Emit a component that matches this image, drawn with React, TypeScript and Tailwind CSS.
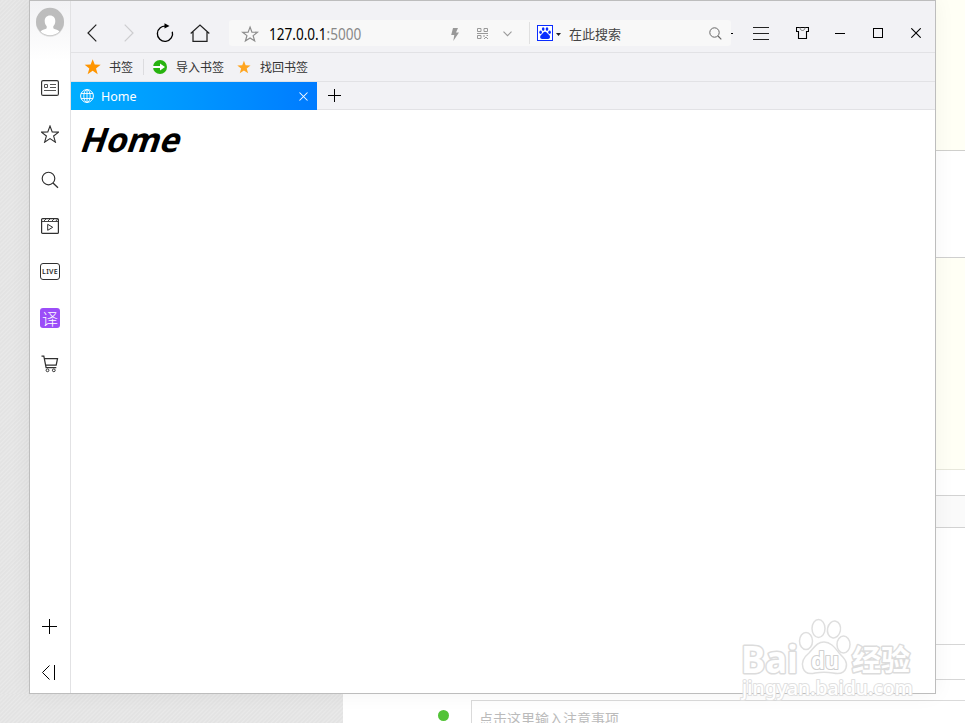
import React from "react";

const UI = "font-['Noto_Sans','Noto_Sans_CJK_SC',sans-serif]";

type IconProps = {
  w: number;
  h: number;
  className?: string;
  children: React.ReactNode;
};

function Icon({ w, h, className = "", children }: IconProps) {
  return (
    <svg
      width={w}
      height={h}
      viewBox={`0 0 ${w} ${h}`}
      fill="none"
      stroke="currentColor"
      className={`block shrink-0 ${className}`}
    >
      {children}
    </svg>
  );
}

const STAR = "M9 1 L11.2 6.9 L17.6 7.1 L12.6 11 L14.4 17.2 L9 13.6 L3.6 17.2 L5.4 11 L0.4 7.1 L6.8 6.9 Z";

/* Page that is partly visible behind the browser window */
function BackgroundPage() {
  return (
    <div className="flex h-full w-full flex-col">
      <div className="flex h-[694px] shrink-0">
        <div className="w-[343px] bg-[#e6e6e6] bg-[repeating-linear-gradient(135deg,#e3e3e3_0px,#e3e3e3_1px,#e9e9e9_2px,#e5e5e5_3px)]" />
        <div className="flex-1 bg-white" />
        <div className="flex w-[30px] flex-col bg-white">
          <div className="h-[151px] border-b border-[#cfcfcc] bg-[#fffff5]" />
          <div className="h-[107px] border-b border-[#cfcfcf]" />
          <div className="h-[212px] border-b border-[#e8e8dc] bg-[#fffff5]" />
          <div className="h-[26px] border-b border-[#d2d2d2]" />
          <div className="h-8 border-b border-[#d2d2d2] bg-[#fafafa]" />
          <div className="h-[117px] border-b border-[#d6d6d6]" />
          <div className="h-[35px] border-b border-[#d6d6d6]" />
        </div>
      </div>
      <div className="flex h-[29px] overflow-hidden">
        <div className="w-[343px] bg-[#e6e6e6] bg-[repeating-linear-gradient(135deg,#e3e3e3_0px,#e3e3e3_1px,#e9e9e9_2px,#e5e5e5_3px)]" />
        <div className="flex flex-1 bg-white pl-[95px]">
          <div className="mt-4 size-[11px] rounded-full bg-[#52c337]" />
          <div className="ml-[22px] mt-1.5 flex-1 overflow-hidden border-l border-t border-[#dadada] pl-[7px] pt-2">
            <div className="whitespace-nowrap text-[14px] leading-5 text-[#bbbbbb]">点击这里输入注意事项</div>
          </div>
        </div>
      </div>
    </div>
  );
}

function Sidebar() {
  return (
    <aside className="flex w-[41px] flex-col items-center border-r border-[#e2e2e4] bg-[linear-gradient(#f2f2f4_0px,#ffffff_60px)] text-[#303030]">
      <Icon w={30} h={30} className="mt-1.5">
        <circle cx="15" cy="15.8" r="14" fill="#dedede" stroke="none" />
        <circle cx="15" cy="14.8" r="14" fill="#bdbdbd" stroke="none" />
        <path d="M15 8.5c-3.4 0-5.3 2.3-5.3 5.6 0 2.6 1 4.1 2 5.2v2c-1 1-4.500 1.200-6.200 3.200A14 14 0 0 0 24.500 24.500c-1.700-2-5.200-2.200-6.200-3.200v-2c1-1.100 2-2.600 2-5.200 0-3.300-1.900-5.600-5.300-5.600z" fill="#fff" stroke="none" />
      </Icon>
      <Icon w={18} h={16} className="mt-[43px]">
        <rect x=".6" y=".6" width="16.800" height="14.800" rx="1.500" strokeWidth="1.150" />
        <path d="M3.500 4.500h3v3h-3zM9 4.500h6M9 7.500h6M3 10.500h12" stroke="#555" />
      </Icon>
      <Icon w={18} h={18} className="mt-[29px]">
        <path d={STAR} strokeWidth="1.100" />
      </Icon>
      <Icon w={18} h={18} className="mt-7">
        <circle cx="7.500" cy="7.500" r="6.300" strokeWidth="1.150" />
        <path d="M12 12l5 4.700" strokeWidth="1.300" />
      </Icon>
      <Icon w={18} h={16} className="mt-[29px]">
        <rect x=".6" y=".6" width="16.800" height="14.800" rx="1" strokeWidth="1.200" />
        <path d="M1 3.500h16M3 3l2-2M7 3l2-2M11 3l2-2M15 3l1.500-2" strokeWidth=".9" />
        <path d="M6.700 6.300v6l5-3z" />
      </Icon>
      <div className="mt-[29px] flex h-[17px] w-5 items-center justify-center rounded-[3px] border border-[#303030] text-[7px] font-semibold leading-none tracking-[0.3px]">
        LIVE
      </div>
      <div className="mt-7 flex size-5 items-center justify-center rounded-[3px] bg-[#9b4df8] font-['Noto_Sans_CJK_SC',sans-serif] text-[16px] font-light leading-none text-white">
        译
      </div>
      <Icon w={18} h={18} className="mt-[27px]">
        <path d="M.5 1h2.300l2.300 11.600h10.200M3.500 3.500h13L15.200 10H5" strokeWidth="1.250" />
        <circle cx="6.500" cy="15.300" r="1.400" />
        <circle cx="12.800" cy="15.300" r="1.400" />
      </Icon>
      <div className="flex-1" />
      <Icon w={15} h={15} className="mr-0.5 text-black">
        <path d="M7.500 0v15M0 7.500h15" />
      </Icon>
      <Icon w={14} h={15} className="mb-[13px] mr-0.5 mt-[31px] text-black">
        <path d="M7.500.5l-7 7 7 7M12.500 0v15" />
      </Icon>
    </aside>
  );
}

function PawBadge() {
  return (
    <Icon w={16} h={16}>
      <rect x=".5" y=".5" width="15" height="15" fill="#fff" stroke="#0a2cff" />
      <g fill="#0a2cff" stroke="none">
        <ellipse cx="3.600" cy="7.300" rx="1.300" ry="1.700" />
        <ellipse cx="6.200" cy="4.100" rx="1.300" ry="1.800" />
        <ellipse cx="10" cy="4.100" rx="1.300" ry="1.800" />
        <ellipse cx="12.600" cy="7.300" rx="1.300" ry="1.700" />
        <path d="M8 6.800c-1.800 0-2.200 2-3.700 3-1.700 1.300-1.500 4.200.8 4.200h6c2.300 0 2.500-2.900.8-4.200C10.400 8.800 9.800 6.800 8 6.800z" />
      </g>
    </Icon>
  );
}

function Toolbar() {
  return (
    <div className="flex h-[52px] items-center border-b border-[#e2e2e5] pt-[13px] text-[#222]">
      <Icon w={10} h={18} className="ml-4">
        <path d="M9.300.7L1 9l8.300 8.300" strokeWidth="1.200" />
      </Icon>
      <Icon w={10} h={18} className="ml-[27px] text-[#cdcdcf]">
        <path d="M.7.7L9 9 .7 17.300" strokeWidth="1.200" />
      </Icon>
      <Icon w={18} h={20} className="ml-[22px] text-black">
        <path d="M16.300 8.700A7.600 7.600 0 1 1 10.500 3.300" strokeWidth="1.350" />
        <path d="M8.500.3l5 2.700-5 2.500z" fill="currentColor" stroke="none" />
      </Icon>
      <Icon w={20} h={18} className="ml-4">
        <path d="M.7 9.500L10 1l9.300 8.500M3 8v9.300h14V8" strokeWidth="1.250" />
      </Icon>
      <div className="ml-[19px] flex h-[26px] w-[502px] items-center rounded-[3px] bg-[#f8f8f8] text-[#999]">
        <Icon w={18} h={18} className="ml-3 mt-0.5 text-[#8c8c8c]">
          <g transform="translate(1.300 1.200) scale(.86)">
            <path d={STAR} strokeWidth="1.350" />
          </g>
        </Icon>
        <div className="ml-[10px] w-[184px] whitespace-nowrap pt-px">
          <span className="inline-block origin-left scale-x-[0.876] text-[15.5px] leading-5 text-[#888]">
            <span className="text-black">127.0.0.1</span>:5000
          </span>
        </div>
        <Icon w={8} h={13} className="-ml-0.5 mt-0.5">
          <path d="M2 0h5L5 4.500h3L2.300 13l1-6H.2z" fill="#999" stroke="none" />
        </Icon>
        <Icon w={11} h={11} className="ml-[18px]">
          <path d="M.5.500h3.500v3H.500zM7 .5h3.500v3H7zM.5 7.500H4v3H.500zM0 5.500h11M7 7v2M9.500 7.500h1.500M8 9.500h2M7 10.500h1M10 10.500h1" />
        </Icon>
        <Icon w={9} h={6} className="ml-[15px] mt-0.5">
          <path d="M.5.700l4 4 4-4" strokeWidth="1.100" />
        </Icon>
        <div className="ml-[17px] h-[22px] w-px bg-[#e0e0e0]" />
        <div className="ml-[7px]">
          <PawBadge />
        </div>
        <Icon w={5} h={3} className="ml-[3px] mt-0.5">
          <path d="M0 0h5L2.500 3z" fill="#222" stroke="none" />
        </Icon>
        <span className="ml-2 whitespace-nowrap pt-0.5 text-[13px] leading-5 text-[#444]">在此搜索</span>
        <Icon w={13} h={13} className="ml-auto mr-[9px] mt-px text-[#666]">
          <circle cx="5.500" cy="5.500" r="4.700" />
          <path d="M9 9l3.300 3.300" strokeWidth="1.200" />
        </Icon>
      </div>
      <div className="h-px w-0.5 bg-black" />
      <Icon w={16} h={13} className="ml-5">
        <path d="M0 .5h16M0 6.500h16M0 12.500h16" />
      </Icon>
      <Icon w={13} h={12} className="ml-[27px] text-black">
        <path d="M.5.500h12v4h-2v7h-8v-7h-2z" strokeWidth="1.100" />
        <path d="M4 .5c0 4 5 4 5 0" stroke="#777" />
      </Icon>
      <div className="ml-[26px] h-px w-2.5 bg-black" />
      <div className="ml-7 size-[10px] border border-black" />
      <Icon w={10} h={10} className="ml-7 text-black">
        <path d="M.3.300l9.400 9.400M9.700.300l-9.400 9.400" strokeWidth="1.100" />
      </Icon>
    </div>
  );
}

function BookmarksBar() {
  return (
    <div className="flex h-[29px] items-center border-b border-[#e2e2e5] text-[12px] text-[#333]">
      <Icon w={18} h={18} className="ml-[13px] text-[#ff9500]">
        <g transform="translate(.300 .200) scale(.93)">
          <path d={STAR} fill="currentColor" stroke="none" />
        </g>
      </Icon>
      <span className="ml-[7px] whitespace-nowrap pt-0.5">书签</span>
      <div className="ml-[10px] h-4 w-px bg-[#dcdcdf]" />
      <Icon w={14} h={14} className="ml-[9px]">
        <circle cx="7" cy="7" r="7" fill="#27b30f" stroke="none" />
        <path d="M0 6h7V3.500L12 7l-5 3.500V8H0z" fill="#fff" stroke="none" />
      </Icon>
      <span className="ml-[9px] whitespace-nowrap pt-0.5">导入书签</span>
      <Icon w={14} h={14} className="ml-[13px] text-[#ffa51f]">
        <g transform="scale(.77)">
          <path d={STAR} fill="currentColor" stroke="none" />
        </g>
      </Icon>
      <span className="ml-[9px] whitespace-nowrap pt-0.5">找回书签</span>
    </div>
  );
}

function TabStrip() {
  return (
    <div className="flex h-7">
      <div className="flex w-[246px] items-center bg-gradient-to-r from-[#00aeff] to-[#007bff] text-white">
        <Icon w={14} h={14} className="ml-[9px]">
          <circle cx="7" cy="7" r="6.400" />
          <ellipse cx="7" cy="7" rx="3.200" ry="6.400" strokeWidth=".9" />
          <path d="M7 .5v13M1 4.500h12M1 9.500h12" strokeWidth=".9" />
        </Icon>
        <span className="ml-[7px] pt-0.5 text-[12.5px] leading-5">Home</span>
        <Icon w={9} h={9} className="ml-auto mr-[9px]">
          <path d="M.5.500l8 8M8.500.500l-8 8" strokeWidth="1.050" />
        </Icon>
      </div>
      <div className="flex flex-1 items-center border-b border-[#e2e2e5] pl-[11px] text-black">
        <Icon w={13} h={13}>
          <path d="M6.500 0v13M0 6.500h13" />
        </Icon>
      </div>
    </div>
  );
}

function Watermark() {
  return (
    <svg width="190" height="90" viewBox="0 0 190 90" className="block">
      <g fill="#ffffff" stroke="#dfdfdf" strokeWidth="1.500">
        <ellipse cx="75" cy="26" rx="6.500" ry="8.500" />
        <ellipse cx="87.500" cy="13.500" rx="6.500" ry="9" />
        <ellipse cx="103" cy="14.500" rx="6.500" ry="8.500" transform="rotate(12 103 14.500)" />
        <ellipse cx="112.500" cy="29.500" rx="6.500" ry="8.500" />
        <path d="M93 27c-7 0-10 6-15 11-5 4-8 9-6 15 2 6 8 6 12 5 6-1 12-1 18 0 5 1 11 1 13-5 2-6-2-10-6-14-5-6-9-12-16-12z" />
      </g>
      <g strokeLinejoin="round" fontWeight="bold" fill="#fff" stroke="#dcdcdc" strokeWidth="3" paintOrder="stroke">
        <text x="10" y="57.500" fontSize="37" textLength="57" lengthAdjust="spacingAndGlyphs" className="font-['Noto_Sans']">Bai</text>
        <text x="121" y="56" fontSize="29" textLength="58" className="font-['Noto_Sans_CJK_SC']">经验</text>
        <text x="80" y="54" fontSize="23" strokeWidth="2.200" stroke="#d0d0d0" textLength="28" lengthAdjust="spacingAndGlyphs" className="font-['Noto_Sans']">du</text>
      </g>
      <text x="11" y="80" fontSize="20" fill="#fff" stroke="#e0e0e0" strokeWidth="2" strokeLinejoin="round" paintOrder="stroke" textLength="171" lengthAdjust="spacingAndGlyphs" className="font-['Noto_Sans'] font-medium">jingyan.baidu.com</text>
    </svg>
  );
}

export default function App() {
  return (
    <div className={`relative h-[723px] w-[965px] overflow-hidden bg-white ${UI}`}>
      <BackgroundPage />
      <div className="absolute left-[29px] top-0 flex h-[694px] w-[907px] border border-[#bdbdbd] bg-white shadow-[0_0_20px_rgba(0,0,0,0.05)]">
        <Sidebar />
        <main className="flex flex-1 flex-col">
          <header className="bg-[#f2f2f5]">
            <Toolbar />
            <BookmarksBar />
            <TabStrip />
          </header>
          <section className="flex-1 pl-[12px] pt-[7px]">
            <h1 className="inline-block -skew-x-[19deg] text-[33.5px] font-bold leading-[44px] text-black">Home</h1>
          </section>
        </main>
      </div>
      <div className="absolute left-[731px] top-[615px]">
        <Watermark />
      </div>
    </div>
  );
}
